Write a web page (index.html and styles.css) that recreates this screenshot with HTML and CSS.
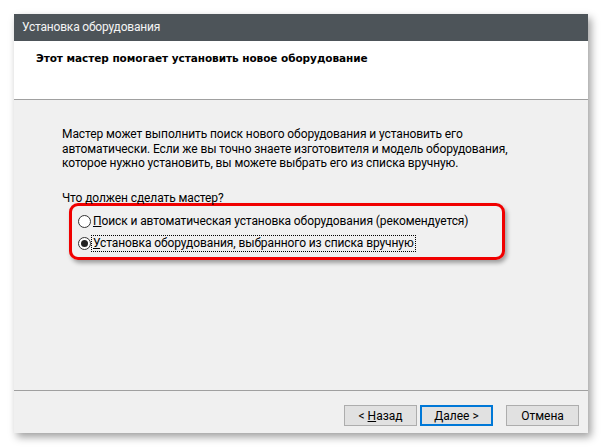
FILE: index.html
```html
<!DOCTYPE html>
<html lang="ru">
<head>
<meta charset="utf-8">
<title>Установка оборудования</title>
<link rel="stylesheet" href="styles.css">
</head>
<body>
<div class="stage">
  <div class="window">
    <div class="titlebar">Установка оборудования</div>
    <div class="header">Этот мастер помогает установить новое оборудование</div>
    <div class="content">
      <p class="intro">Мастер может выполнить поиск нового оборудования и установить его автоматически. Если же вы точно знаете изготовителя и модель оборудования, которое нужно установить, вы можете выбрать его из списка вручную.</p>
      <p class="question">Что должен сделать мастер?</p>
      <div class="options">
        <div class="option">
          <span class="radio"></span>
          <span class="label"><u>П</u>оиск и автоматическая установка оборудования (рекомендуется)</span>
        </div>
        <div class="option">
          <span class="radio checked"></span>
          <span class="label focused"><u>У</u>становка оборудования, выбранного из списка вручную</span>
        </div>
      </div>
    </div>
    <div class="footer">
      <button class="btn">&lt; <u>Н</u>азад</button>
      <button class="btn primary"><u>Д</u>алее &gt;</button>
      <button class="btn cancel">Отмена</button>
    </div>
  </div>
</div>
</body>
</html>
```
FILE: styles.css
```css
html, body {
  margin: 0;
  padding: 0;
  background: #ffffff;
}
.stage {
  padding: 14px;
}
.window {
  width: 574px;
  height: 419px;
  display: flex;
  flex-direction: column;
  background: #f0f0f0;
  box-shadow: 3px 4px 8px rgba(0, 0, 0, 0.38);
  font-family: Roboto, "Noto Sans", sans-serif;
  font-size: 12px;
  letter-spacing: -0.1px;
  color: #000;
}
.titlebar {
  height: 27px;
  background: #4d5459;
  color: #f4f4f4;
  padding-left: 8px;
  line-height: 26px;
  font-size: 12px;
  letter-spacing: -0.2px;
}
.header {
  background: #ffffff;
  border-bottom: 1px solid #a0a0a0;
  padding-left: 22px;
  box-sizing: border-box;
  height: 59px;
  line-height: 14px;
  padding-top: 10px;
  font-family: "DejaVu Sans", sans-serif;
  font-weight: bold;
  font-size: 10.5px;
  letter-spacing: -0.05px;
}
.content {
  flex: 1;
  padding: 27px 0 0 48px;
  border-bottom: 1px solid #a0a0a0;
}
.intro {
  margin: 0;
  width: 462px;
  line-height: 14.5px;
}
.question {
  margin: 20px 0 0 0;
  line-height: 15px;
}
.options {
  margin: -3px 0 0 7px;
  width: 424px;
  border: 3px solid #f00000;
  border-radius: 9px;
  padding: 8px 0 5px 6px;
  display: flex;
  flex-direction: column;
  gap: 6px;
  box-shadow: 2px 3px 4px rgba(0, 0, 0, 0.35);
}
.option {
  display: flex;
  align-items: center;
  height: 16px;
  gap: 1px;
}
.radio {
  width: 11px;
  height: 11px;
  border: 1px solid #333;
  border-radius: 50%;
  background: #fff;
  position: relative;
  flex: none;
}
.radio.checked::after {
  content: "";
  position: absolute;
  left: 2px;
  top: 2px;
  width: 7px;
  height: 7px;
  border-radius: 50%;
  background: #222;
}
.label {
  line-height: 15px;
  padding: 0 1px;
  white-space: nowrap;
}
.label.focused {
  outline: 1px dotted #000;
}
.footer {
  height: 42px;
  display: flex;
  padding: 14px 9px 0 0;
  box-sizing: border-box;
  justify-content: flex-end;
  align-items: flex-start;
}
.btn {
  width: 73px;
  height: 21px;
  margin: 0;
  padding: 0;
  background: #e1e1e1;
  border: 1px solid #adadad;
  font-family: Roboto, "Noto Sans", sans-serif;
  font-size: 12px;
  color: #000;
  line-height: 18px;
}
.btn.primary {
  margin-left: 3px;
  border: 2px solid #0078d7;
}
.btn.cancel {
  margin-left: 13px;
}
```
